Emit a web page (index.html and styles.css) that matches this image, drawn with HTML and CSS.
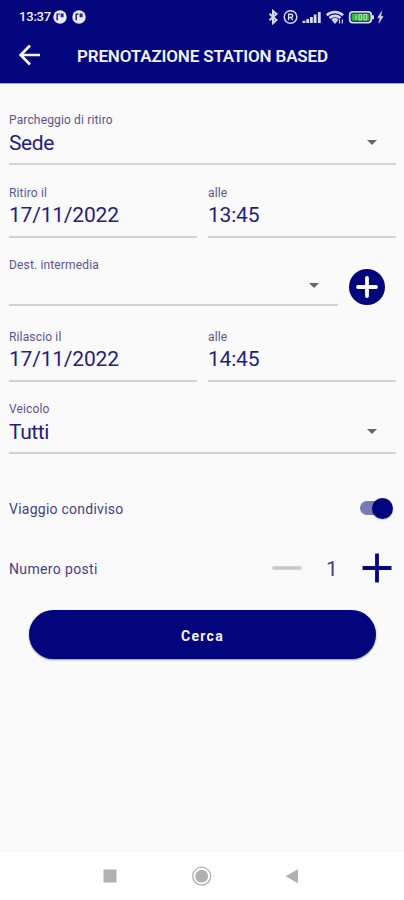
FILE: index.html
```
<!DOCTYPE html>
<html lang="it">
<head>
<meta charset="utf-8">
<title>Prenotazione station based</title>
<link rel="stylesheet" href="styles.css">
</head>
<body>
<header class="top">
  <div class="status">
    <span class="clock">13:37</span>
    <svg class="note" viewBox="0 0 14 14"><circle cx="7" cy="7" r="6.7" fill="#e9e9fa"/><path d="M3.4 3.4h3.4v1.3H5v5.6H3.4zM7.6 3.4h3v3.8h-3z" fill="#25288c"/></svg>
    <svg class="note second" viewBox="0 0 14 14"><circle cx="7" cy="7" r="6.7" fill="#e9e9fa"/><path d="M3.4 3.4h3.4v1.3H5v5.6H3.4zM7.6 3.4h3v3.8h-3z" fill="#25288c"/></svg>
    <svg class="system" viewBox="0 0 118 16" fill="none" stroke="#d9d9f3">
      <path d="M1.5 4.8l7 6.3-3.5 3V1.9l3.5 3-7 6.3" stroke-width="2"/>
      <circle cx="22.5" cy="8" r="6.3" stroke-width="1.5"/>
      <path d="M20.6 11.2V5.2h2.5a1.6 1.6 0 010 3.3h-2.5m2.3 0l2 2.7" stroke-width="1.4"/>
      <path d="M36 14v-2.2M39.7 14v-4M43.4 14V8M47.1 14V5.5M51.3 14V3" stroke-width="2.8"/>
      <path d="M58.7 6.2c4.6-4.3 11.8-4.3 16.4 0M61.5 9c3.2-2.8 7.8-2.8 11 0M64.2 11.5c1.8-1.4 3.7-1.4 5.5 0" stroke-width="2.6"/>
      <path d="M64.5 12h5L67 15z" fill="#d9d9f3" stroke="none"/>
      <path d="M71.5 10.5v4m2.8-4v4" stroke-width="1.2"/>
      <rect x="81.7" y="2.8" width="21.5" height="10.8" rx="3" stroke-width="1.8"/>
      <rect x="83.5" y="4.6" width="18" height="7.2" rx="1" fill="#35b23c" stroke="none"/>
      <path d="M88 5.5v5.5M91 5.5h2.7V11H91zM96 5.5h2.7V11H96z" stroke="#b9e5c0" stroke-width="1"/>
      <path d="M105 6.2v4" stroke-width="2"/>
      <path d="M113.7 2.5l-4 6.3h2.5l-1.3 5.2 4.2-6.6h-2.4z" fill="#d9d9f3" stroke-width=".6"/>
    </svg>
  </div>
  <div class="bar">
    <svg class="back" viewBox="0 0 22 22"><path d="M21 11H2M11 1.5L1.7 11l9.3 9.5" fill="none" stroke="#f4f4ff" stroke-width="2.7"/></svg>
    <h1>PRENOTAZIONE STATION BASED</h1>
  </div>
</header>
<main>
  <div class="field"><span class="label">Parcheggio di ritiro</span><span class="value word">Sede</span><i class="caret"></i></div>
  <div class="row">
    <div class="field"><span class="label">Ritiro il</span><span class="value">17/11/2022</span></div>
    <div class="field"><span class="label">alle</span><span class="value">13:45</span></div>
  </div>
  <div class="row stop">
    <div class="field thin"><span class="label">Dest. intermedia</span><i class="caret"></i></div>
    <svg class="add" viewBox="0 0 36 36"><circle cx="18" cy="18" r="18" fill="#02057c"/><path d="M18 9v18M9 18h18" stroke="#fff" stroke-width="3.8" stroke-linecap="round"/></svg>
  </div>
  <div class="row">
    <div class="field"><span class="label">Rilascio il</span><span class="value">17/11/2022</span></div>
    <div class="field"><span class="label">alle</span><span class="value">14:45</span></div>
  </div>
  <div class="field"><span class="label">Veicolo</span><span class="value word">Tutti</span><i class="caret"></i></div>
  <div class="option shared"><span>Viaggio condiviso</span><span class="switch"><i class="thumb"></i></span></div>
  <div class="option seats"><span class="seatlabel">Numero posti</span>
    <svg class="minus" viewBox="0 0 30 30"><path d="M.5 15h29" stroke="#c8c8c8" stroke-width="3.6"/></svg>
    <span class="count">1</span>
    <svg class="plus" viewBox="0 0 30 30"><path d="M.5 15h29M15 .5v29" stroke="#02057c" stroke-width="3.8"/></svg>
  </div>
  <button class="search">Cerca</button>
</main>
<nav>
  <svg viewBox="0 0 404 48"><rect x="103.5" y="17.5" width="13" height="13" fill="#b1b1b1"/><circle cx="201.7" cy="24.2" r="9" fill="none" stroke="#b1b1b1" stroke-width="1.3"/><circle cx="201.7" cy="24.2" r="6.4" fill="#b1b1b1"/><path d="M298 17.2v14l-12.5-7z" fill="#b1b1b1"/></svg>
</nav>
</body>
</html>
```
FILE: styles.css
```
* { box-sizing: border-box; }
body {
  margin: 0;
  height: 900px;
  display: flex;
  flex-direction: column;
  background: #fafafa;
  color: #261c7e;
  font-family: Roboto, "Liberation Sans", sans-serif;
  overflow: hidden;
}
svg { display: block; flex: none; }
.top {
  height: 84px;
  background: #02057c;
  border-bottom: 1px solid #a9aad4;
  color: #f2f2ff;
}
.status {
  height: 32px;
  padding: 1px 18px 0 19px;
  display: flex;
  align-items: center;
}
.clock { width: 34px; font-size: 13px; line-height: 16px; font-weight: 500; letter-spacing: -.2px; }
.note { width: 14px; height: 14px; }
.second { margin-left: 5px; }
.system { width: 118px; height: 16px; margin-left: auto; }
.bar { height: 50px; padding-left: 19px; display: flex; align-items: center; }
.back { width: 22px; height: 22px; margin-top: -4px; }
h1 { margin: -2px 0 0 36px; font-size: 17px; line-height: 24px; font-weight: 600; letter-spacing: -.16px; white-space: nowrap; }
main { flex: 1; padding: 27px 8px 0 9px; }
.field {
  position: relative;
  height: 54px;
  flex: 1;
  display: flex;
  flex-direction: column;
  border-bottom: 2px solid #d2d2d2;
}
main > .field:first-child { margin-bottom: 19px; }
.row { display: flex; gap: 11px; margin-bottom: 18px; }
.label { font-size: 12px; line-height: 18px; letter-spacing: .15px; color: #5a5490; }
.value { font-size: 21px; line-height: 28px; letter-spacing: -.2px; }
.row .value { line-height: 27px; }
.word { letter-spacing: -.4px; }
.caret {
  position: absolute;
  right: 19px;
  bottom: 18px;
  border: 5px solid transparent;
  border-top-color: #666;
  border-bottom: 0;
}
.stop { margin-bottom: 22px; }
.stop .field { height: 50px; }
.stop .caret { bottom: 16px; }
.add { width: 36px; height: 36px; margin: 13px 11px 0 0; }
.option { display: flex; align-items: center; font-size: 14px; letter-spacing: .25px; color: #453e8a; }
.shared { height: 32px; margin-top: 38px; padding-right: 3px; justify-content: space-between; }
.shared > span:first-child { padding-top: 1px; }
.switch {
  position: relative;
  width: 33px;
  height: 21px;
  display: flex;
  justify-content: flex-end;
}
.switch::before {
  content: "";
  position: absolute;
  left: 0;
  top: 3px;
  width: 27px;
  height: 14px;
  border-radius: 7px;
  background: #7779b8;
}
.thumb { position: relative; width: 21px; height: 21px; border-radius: 50%; background: #02057c; box-shadow: 0 1px 2px #0003; }
.seats { height: 32px; margin-top: 28px; padding-right: 4px; }
.seatlabel { flex: 1; padding-top: 1px; letter-spacing: .35px; }
.minus, .plus { width: 30px; height: 30px; }
.count { width: 60px; padding-top: 2px; text-align: center; font-size: 21px; line-height: 28px; }
.search {
  display: block;
  width: 347px;
  height: 49px;
  margin: 26px 0 0 20px;
  padding: 2px 0 0;
  border: 0;
  border-radius: 25px;
  background: #02057c;
  box-shadow: 0 1px 2px #0006;
  color: #f4f4ff;
  font: 700 14px Roboto, "Liberation Sans", sans-serif;
  letter-spacing: 1.3px;
}
nav { height: 48px; background: #fff; }
nav svg { width: 404px; height: 48px; }
```
